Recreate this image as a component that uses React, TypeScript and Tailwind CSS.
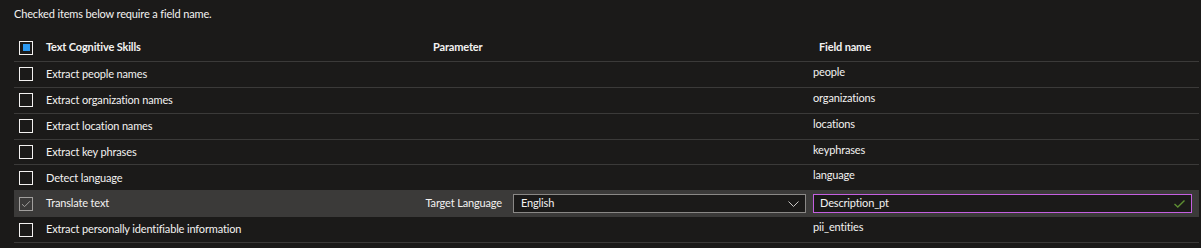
import React from "react";

const font = { fontFamily: 'Lato, "Noto Sans", sans-serif' };

type Row = { label: string; field: string; checked?: boolean; translate?: boolean };

const rows: Row[] = [
  { label: "Extract people names", field: "people" },
  { label: "Extract organization names", field: "organizations" },
  { label: "Extract location names", field: "locations" },
  { label: "Extract key phrases", field: "keyphrases" },
  { label: "Detect language", field: "language" },
  { label: "Translate text", field: "Description_pt", checked: true, translate: true },
  { label: "Extract personally identifiable information", field: "pii_entities" },
];

function Box({ state }: { state: "none" | "partial" | "checked" }) {
  if (state === "checked") {
    return (
      <div className="w-[14px] h-[14px] border border-[#a19f9d] flex items-center justify-center">
        <svg width="10" height="8" viewBox="0 0 10 8" fill="none">
          <path d="M1 4.2 L3.6 6.6 L9 1.2" stroke="#a19f9d" strokeWidth="1" />
        </svg>
      </div>
    );
  }
  return (
    <div className="w-[14px] h-[14px] border border-[#f3f2f1] flex items-center justify-center">
      {state === "partial" && <div className="w-[7px] h-[7px] bg-[#2b9af3]" />}
    </div>
  );
}

export default function App() {
  return (
    <div
      className="w-[1201px] h-[248px] bg-[#1b1a19] text-[#f3f2f1] text-[11px] tracking-[-0.15px] overflow-hidden"
      style={font}
    >
      <div className="pl-[14px] pt-[6px] h-[34px] leading-[16px]">Checked items below require a field name.</div>
      <div className="ml-[14px] w-[1185px]">
        <div className="flex h-[28px] border-b border-[#3b3a39] font-bold">
          <div className="w-[412px] flex items-center">
            <div className="ml-[5px] mr-[13px]"><Box state="partial" /></div>
            <span>Text Cognitive Skills</span>
          </div>
          <div className="w-[387px] flex items-center pl-[7px]">Parameter</div>
          <div className="flex-1 flex items-center pl-[6px]">Field name</div>
        </div>
        {rows.map((r) => (
          <div
            key={r.label}
            className={
              "flex h-[25.86px] border-b " +
              (r.translate ? "bg-[#3b3a39] border-[#3b3a39]" : "border-[#3b3a39]")
            }
          >
            <div className="w-[412px] flex items-center whitespace-nowrap">
              <div className="ml-[5px] mr-[13px]"><Box state={r.checked ? "checked" : "none"} /></div>
              <span>{r.label}</span>
            </div>
            {r.translate ? (
              <>
                <div className="w-[387px] flex items-center justify-end pr-[7px]">
                  <span className="mr-[11px] whitespace-nowrap">Target Language</span>
                  <div className="w-[293px] shrink-0 h-[19px] border border-[#8a8886] bg-[#1b1a19] flex items-center justify-between pl-[7px] pr-[6px]">
                    <span>English</span>
                    <svg width="11" height="6" viewBox="0 0 11 6" fill="none">
                      <path d="M0.5 0.5 L5.5 5.5 L10.5 0.5" stroke="#c8c6c4" strokeWidth="1" />
                    </svg>
                  </div>
                </div>
                <div className="flex-1 flex items-center pr-[7px]">
                  <div className="w-full h-[19px] border border-[#c45fe0] bg-[#1b1a19] flex items-center justify-between pl-[6px] pr-[6px]">
                    <span>{r.field}</span>
                    <svg width="11" height="8" viewBox="0 0 11 8" fill="none">
                      <path d="M0.5 4 L3.8 7 L10.5 0.6" stroke="#5e8f32" strokeWidth="1.4" />
                    </svg>
                  </div>
                </div>
              </>
            ) : (
              <>
                <div className="w-[387px]" />
                <div className="flex-1 pt-[2px] leading-[16px]">{r.field}</div>
              </>
            )}
          </div>
        ))}
      </div>
    </div>
  );
}
